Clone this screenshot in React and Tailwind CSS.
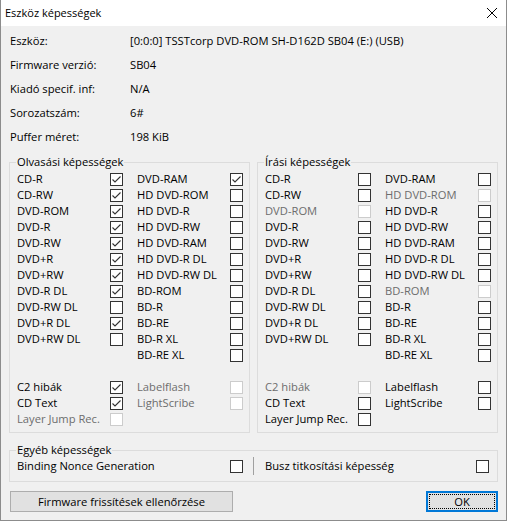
import React from "react";

const ON = "on";
const OFF = "off";
const DIS = "dis";

function Box({ state }) {
  if (state === DIS) {
    return <div className="w-[13px] h-[13px] border border-[#cccccc] bg-white" />;
  }
  return (
    <div className="w-[13px] h-[13px] border border-[#333333] bg-white flex items-center justify-center">
      {state === ON && (
        <svg width="11" height="11" viewBox="0 0 11 11">
          <polyline points="1.5,5.5 4,8 9.5,2.5" fill="none" stroke="#333333" strokeWidth="1.1" />
        </svg>
      )}
    </div>
  );
}

function Label({ text, state }) {
  return (
    <div className={state === DIS ? "whitespace-nowrap text-[#6d6d6d]" : "whitespace-nowrap text-black"}>{text}</div>
  );
}

function Group({ title, rows }) {
  return (
    <fieldset className="w-[241px] h-[279px] border border-[#dcdcdc] pl-[7px] pt-[1px]">
      <legend className="ml-[-1px] px-[1px] leading-[16px]">{title}</legend>
      <div className="grid grid-cols-[93px_13px_14px_93px_13px] auto-rows-[16px] items-center">
        {rows.map((r, i) => (
          <React.Fragment key={i}>
            {r[0] ? <Label text={r[0][0]} state={r[0][1]} /> : <div />}
            {r[0] ? <Box state={r[0][1]} /> : <div />}
            <div />
            {r[1] ? <Label text={r[1][0]} state={r[1][1]} /> : <div />}
            {r[1] ? <Box state={r[1][1]} /> : <div />}
          </React.Fragment>
        ))}
      </div>
    </fieldset>
  );
}

const readRows = [
  [["CD-R", ON], ["DVD-RAM", ON]],
  [["CD-RW", ON], ["HD DVD-ROM", OFF]],
  [["DVD-ROM", ON], ["HD DVD-R", OFF]],
  [["DVD-R", ON], ["HD DVD-RW", OFF]],
  [["DVD-RW", ON], ["HD DVD-RAM", OFF]],
  [["DVD+R", ON], ["HD DVD-R DL", OFF]],
  [["DVD+RW", ON], ["HD DVD-RW DL", OFF]],
  [["DVD-R DL", ON], ["BD-ROM", OFF]],
  [["DVD-RW DL", OFF], ["BD-R", OFF]],
  [["DVD+R DL", ON], ["BD-RE", OFF]],
  [["DVD+RW DL", OFF], ["BD-R XL", OFF]],
  [null, ["BD-RE XL", OFF]],
  [null, null],
  [["C2 hibák", ON], ["Labelflash", DIS]],
  [["CD Text", ON], ["LightScribe", DIS]],
  [["Layer Jump Rec.", DIS], null],
];

const writeRows = [
  [["CD-R", OFF], ["DVD-RAM", OFF]],
  [["CD-RW", OFF], ["HD DVD-ROM", DIS]],
  [["DVD-ROM", DIS], ["HD DVD-R", OFF]],
  [["DVD-R", OFF], ["HD DVD-RW", OFF]],
  [["DVD-RW", OFF], ["HD DVD-RAM", OFF]],
  [["DVD+R", OFF], ["HD DVD-R DL", OFF]],
  [["DVD+RW", OFF], ["HD DVD-RW DL", OFF]],
  [["DVD-R DL", OFF], ["BD-ROM", DIS]],
  [["DVD-RW DL", OFF], ["BD-R", OFF]],
  [["DVD+R DL", OFF], ["BD-RE", OFF]],
  [["DVD+RW DL", OFF], ["BD-R XL", OFF]],
  [null, ["BD-RE XL", OFF]],
  [null, null],
  [["C2 hibák", DIS], ["Labelflash", OFF]],
  [["CD Text", OFF], ["LightScribe", OFF]],
  [["Layer Jump Rec.", OFF], null],
];

const info = [
  ["Eszköz:", "[0:0:0] TSSTcorp DVD-ROM SH-D162D SB04 (E:) (USB)"],
  ["Firmware verzió:", "SB04"],
  ["Kiadó specif. inf:", "N/A"],
  ["Sorozatszám:", "6#"],
  ["Puffer méret:", "198 KiB"],
];

export default function App() {
  return (
    <div className="w-[507px] h-[521px] bg-[#f0f0f0] border-x border-b border-[#8c8c8c] flex flex-col font-['Open_Sans',sans-serif] text-[11.2px] leading-[16px] text-black">
      <div className="h-[26px] bg-white flex items-center justify-between pl-[4px] pr-[9px]">
        <div className="text-[11px]">Eszköz képességek</div>
        <svg width="10" height="10" viewBox="0 0 10 10">
          <line x1="0" y1="0" x2="10" y2="10" stroke="#000" strokeWidth="1" />
          <line x1="10" y1="0" x2="0" y2="10" stroke="#000" strokeWidth="1" />
        </svg>
      </div>
      <div className="pt-[3px] pl-[9px]">
        {info.map(([k, v]) => (
          <div key={k} className="flex h-[24px] items-center">
            <div className="w-[120px]">{k}</div>
            <div className="whitespace-nowrap">{v}</div>
          </div>
        ))}
      </div>
      <div className="mt-[5px] pl-[8px] flex gap-[7px]">
        <Group title="Olvasási képességek" rows={readRows} />
        <Group title="Írási képességek" rows={writeRows} />
      </div>
      <div className="mt-[9px] pl-[8px]">
        <fieldset className="w-[489px] h-[40px] border border-[#dcdcdc] pl-[7px]">
          <legend className="ml-[-1px] px-[1px] leading-[16px]">Egyéb képességek</legend>
          <div className="flex items-center h-[16px]">
            <div className="w-[213px] whitespace-nowrap">Binding Nonce Generation</div>
            <Box state={OFF} />
            <div className="ml-[10px] w-[1px] h-[18px] bg-[#a0a0a0]" />
            <div className="ml-[11px] w-[211px] whitespace-nowrap">Busz titkosítási képesség</div>
            <Box state={OFF} />
          </div>
        </fieldset>
      </div>
      <div className="mt-[9px] pl-[9px] pr-[8px] flex justify-between">
        <div className="w-[223px] h-[21px] bg-[#e1e1e1] border border-[#adadad] flex items-center justify-center">
          Firmware frissítések ellenőrzése
        </div>
        <div className="w-[72px] h-[21px] bg-[#e1e1e1] border-2 border-[#0078d7] p-[1px]">
          <div className="w-full h-full border border-dotted border-black flex items-center justify-center">OK</div>
        </div>
      </div>
    </div>
  );
}
